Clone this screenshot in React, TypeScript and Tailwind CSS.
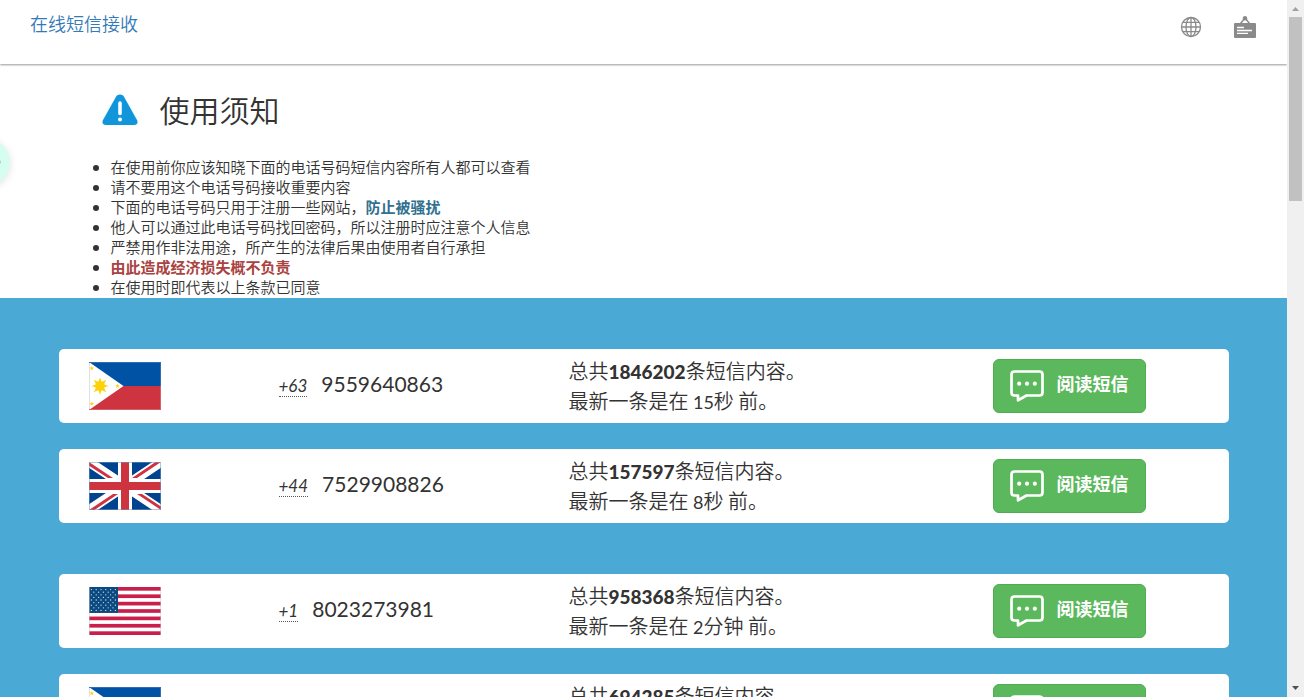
import React from "react";

type Country = "ph" | "gb" | "us";

interface PhoneEntry {
  country: Country;
  code: string;
  number: string;
  total: string;
  amount: string;
  unit: string;
}

const groups: PhoneEntry[][] = [
  [
    { country: "ph", code: "+63", number: "9559640863", total: "1846202", amount: "15", unit: "秒" },
    { country: "gb", code: "+44", number: "7529908826", total: "157597", amount: "8", unit: "秒" },
  ],
  [
    { country: "us", code: "+1", number: "8023273981", total: "958368", amount: "2", unit: "分钟" },
    { country: "ph", code: "+63", number: "9559640864", total: "694285", amount: "2", unit: "分钟" },
  ],
];

function sunPoints(cx: number, cy: number, outer: number, inner: number, rays: number) {
  return Array.from({ length: rays * 2 }, (_, i) => {
    const r = i % 2 === 0 ? outer : inner;
    const a = (Math.PI * i) / rays - Math.PI / 2;
    return `${(cx + r * Math.cos(a)).toFixed(2)},${(cy + r * Math.sin(a)).toFixed(2)}`;
  }).join(" ");
}

function PhilippinesFlag() {
  return (
    <svg viewBox="0 0 72 48" className="block h-12 w-[72px]" aria-hidden="true">
      <rect width="72" height="24" fill="#0052a5" />
      <rect y="24" width="72" height="24" fill="#ce3340" />
      <path d="M0 0L34.500 24L0 48z" fill="#fff" />
      <g fill="#fdd20a">
        <circle cx="11" cy="24" r="4.800" />
        <polygon points={sunPoints(11, 24, 8.8, 4.2, 8)} />
        <polygon points={sunPoints(2.8, 6.3, 2.4, 1, 5)} />
        <polygon points={sunPoints(2.8, 41.7, 2.4, 1, 5)} />
        <polygon points={sunPoints(28.5, 24, 2.4, 1, 5)} />
      </g>
      <path d="M.5 0V48" stroke="#d9e2ea" />
      <path d="M0 .5H72M71.500 0V24" stroke="#2f6fae" fill="none" />
      <path d="M0 47.500H72M71.500 24V48" stroke="#d4606a" fill="none" />
    </svg>
  );
}

function BritainFlag() {
  return (
    <svg viewBox="0 0 72 48" className="block h-12 w-[72px]" aria-hidden="true">
      <rect width="72" height="48" fill="#00438f" />
      <path d="M0 0L72 48M72 0L0 48" stroke="#fff" strokeWidth="9.600" />
      <g fill="#ce3340">
        <path d="M0 0L24 16H19L0 3.700z" />
        <path d="M72 0L48 16H43L66.500 0z" />
        <path d="M72 48L48 32H53L72 44.500z" />
        <path d="M0 48L24 32H29L5.500 48z" />
      </g>
      <path d="M36 0V48M0 24H72" stroke="#fff" strokeWidth="14" />
      <path d="M36 0V48M0 24H72" stroke="#ce3340" strokeWidth="8" />
      <rect x=".5" y=".5" width="71" height="47" fill="none" stroke="#6f9abf" strokeOpacity=".55" />
    </svg>
  );
}

function UsaFlag() {
  const stripes = [0, 2, 4, 6, 8, 10, 12];
  const rows = [0, 1, 2, 3, 4, 5, 6, 7, 8];
  return (
    <svg viewBox="0 0 72 48" className="block h-12 w-[72px]" aria-hidden="true">
      <rect width="72" height="48" fill="#fff" />
      {stripes.map((n) => (
        <rect key={n} y={(n * 48) / 13} width="72" height={48 / 13} fill="#c8204b" />
      ))}
      <rect width="29" height="25.800" fill="#0a4a80" />
      {rows.map((row) =>
        Array.from({ length: row % 2 === 0 ? 6 : 5 }, (_, col) => (
          <circle
            key={`${row}-${col}`}
            cx={2.4 + col * 4.8 + (row % 2) * 2.4}
            cy={2.6 + row * 2.6}
            r=".65"
            fill="#d5e3ee"
          />
        ))
      )}
      <path d="M.5 0V48M71.500 0V48" stroke="#c9c3cd" strokeOpacity=".5" />
    </svg>
  );
}

const flags: Record<Country, () => React.JSX.Element> = {
  ph: PhilippinesFlag,
  gb: BritainFlag,
  us: UsaFlag,
};

function WarningIcon() {
  return (
    <svg viewBox="0 0 36 32" className="h-8 w-9" aria-hidden="true">
      <path
        d="M14 2.700C15.700 -.2 20.300 -.2 22 2.700L35 26C36.500 28.700 34.900 31 32 31H4C1.100 31 -.5 28.700 1 26z"
        fill="#1296db"
      />
      <path d="M18 9V19.500" stroke="#fff" strokeWidth="3.600" strokeLinecap="round" />
      <circle cx="18" cy="25.600" r="2" fill="#fff" />
    </svg>
  );
}

function GlobeIcon() {
  return (
    <svg viewBox="0 0 22 22" className="block size-[22px]" fill="none" stroke="#8a8a8a" strokeWidth="1.300" aria-hidden="true">
      <circle cx="11" cy="11" r="9.500" />
      <ellipse cx="11" cy="11" rx="5" ry="9.500" />
      <path d="M11 1.500V20.500M1.500 11H20.500M3 6.300H19M3 15.700H19" />
    </svg>
  );
}

function BoardIcon() {
  return (
    <svg viewBox="0 0 22 22" className="block size-[22px]" aria-hidden="true">
      <path d="M0 8Q0 7 1 7H21Q22 7 22 8V21Q22 22 21 22H1Q0 22 0 21z" fill="#8a8a8a" />
      <path d="M6.500 7.500L11 2L15.500 7.500" fill="none" stroke="#8a8a8a" strokeWidth="1.500" />
      <circle cx="11" cy="2.200" r="2.200" fill="#8a8a8a" />
      <path d="M3 11.500H10M3 14.500H18M3 17.300H14" stroke="#fff" strokeWidth="1.300" />
    </svg>
  );
}

function MessageIcon() {
  return (
    <svg viewBox="0 0 34 32" className="h-8 w-[34px]" aria-hidden="true">
      <path
        d="M4.500 1.500H29.500Q32.500 1.500 32.500 4.500V22.500Q32.500 25.500 29.500 25.500H16.500L8 30.300V25.500H4.500Q1.500 25.500 1.500 22.500V4.500Q1.500 1.500 4.500 1.500z"
        fill="none"
        stroke="#fff"
        strokeWidth="2.700"
        strokeLinejoin="round"
      />
      <g fill="#fff">
        <circle cx="9.200" cy="13.700" r="2.100" />
        <circle cx="17" cy="13.700" r="2.100" />
        <circle cx="24.800" cy="13.700" r="2.100" />
      </g>
    </svg>
  );
}

function PhoneCard({ entry }: { entry: PhoneEntry }) {
  const Flag = flags[entry.country];
  return (
    <article className="grid grid-cols-[190fr_290fr_424fr_236fr] items-center rounded-[5px] bg-white py-[7px] pl-[30px]">
      <Flag />
      <div className="flex items-baseline gap-[14px] pb-1 font-['Lato','Noto_Sans_CJK_SC',sans-serif] font-normal">
        <abbr className="border-b border-dotted border-[#555] text-[17px] leading-5 italic no-underline">
          {entry.code}
        </abbr>
        <span className="text-[21px] leading-7">{entry.number}</span>
      </div>
      <div className="text-xl leading-[30px]">
        <p>
          总共<strong className="font-['Lato',sans-serif] text-[19px] leading-none font-black">{entry.total}</strong>
          条短信内容。
        </p>
        <p>
          最新一条是在{" "}
          <span className="font-['Lato',sans-serif] text-lg leading-none font-normal">{entry.amount}</span>
          {entry.unit} 前。
        </p>
      </div>
      <a
        href="#messages"
        className="flex h-[54px] items-center gap-[13px] justify-self-start rounded-md border border-[#4cae4c] bg-[#5cb85c] px-4 text-lg font-bold whitespace-nowrap text-white"
      >
        <MessageIcon />
        <span className="pb-1.5">阅读短信</span>
      </a>
    </article>
  );
}

function ScrollTrack() {
  return (
    <div className="flex w-[17px] shrink-0 flex-col items-center bg-[#f0f0f0]" aria-hidden="true">
      <svg viewBox="0 0 17 17" className="size-[17px] shrink-0">
        <path d="M5 11L8.500 7L12 11z" fill="#a0a0a0" />
      </svg>
      <div className="h-[184px] w-[13px] bg-[#c1c1c1]" />
      <svg viewBox="0 0 17 17" className="mt-auto size-[17px] shrink-0">
        <path d="M5 6L8.500 10L12 6z" fill="#505050" />
      </svg>
    </div>
  );
}

export default function App() {
  return (
    <div className="flex h-screen overflow-hidden bg-white font-['Noto_Sans_CJK_SC',sans-serif] font-[350] text-[#333]">
      <div className="relative min-w-0 flex-1 overflow-hidden">
        <header className="flex h-16 justify-between bg-white pr-[31px] pl-[30px] shadow-[0_1px_2px_rgba(0,0,0,0.4)]">
          <a href="#home" className="mt-[11px] self-start text-lg leading-6 text-[#337ab7]">
            在线短信接收
          </a>
          <nav className="mt-4 flex items-start gap-8">
            <button type="button" aria-label="语言">
              <GlobeIcon />
            </button>
            <button type="button" aria-label="公告">
              <BoardIcon />
            </button>
          </nav>
        </header>

        <section className="mx-auto w-full max-w-[1170px] px-3 pt-7 pb-px">
          <div className="flex h-9 items-center gap-[22px] pl-[31px]">
            <WarningIcon />
            <h1 className="pb-0.5 text-3xl leading-9">使用须知</h1>
          </div>
          <ul className="mt-[29px] list-disc pl-10 text-[15px] leading-5">
            <li>在使用前你应该知晓下面的电话号码短信内容所有人都可以查看</li>
            <li>请不要用这个电话号码接收重要内容</li>
            <li>
              下面的电话号码只用于注册一些网站，<strong className="font-bold text-[#31708f]">防止被骚扰</strong>
            </li>
            <li>他人可以通过此电话号码找回密码，所以注册时应注意个人信息</li>
            <li>严禁用作非法用途，所产生的法律后果由使用者自行承担</li>
            <li>
              <strong className="font-bold text-[#a94442]">由此造成经济损失概不负责</strong>
            </li>
            <li>在使用时即代表以上条款已同意</li>
          </ul>
        </section>

        <main className="bg-[#4aa9d5] pt-[51px] pb-12">
          <div className="mx-auto flex w-full max-w-[1170px] flex-col gap-[51px]">
            {groups.map((group, i) => (
              <div key={i} className="flex flex-col gap-[26px]">
                {group.map((entry) => (
                  <PhoneCard key={entry.number} entry={entry} />
                ))}
              </div>
            ))}
          </div>
        </main>

        <div className="absolute top-[139px] -left-9 flex size-[46px] items-center justify-end rounded-full bg-[#d5fdf0] shadow-[0_2px_8px_rgba(0,0,0,0.12)]">
          <span className="mr-[9px] size-1 rounded-full bg-[#b9c9c4]" />
        </div>
      </div>
      <ScrollTrack />
    </div>
  );
}
